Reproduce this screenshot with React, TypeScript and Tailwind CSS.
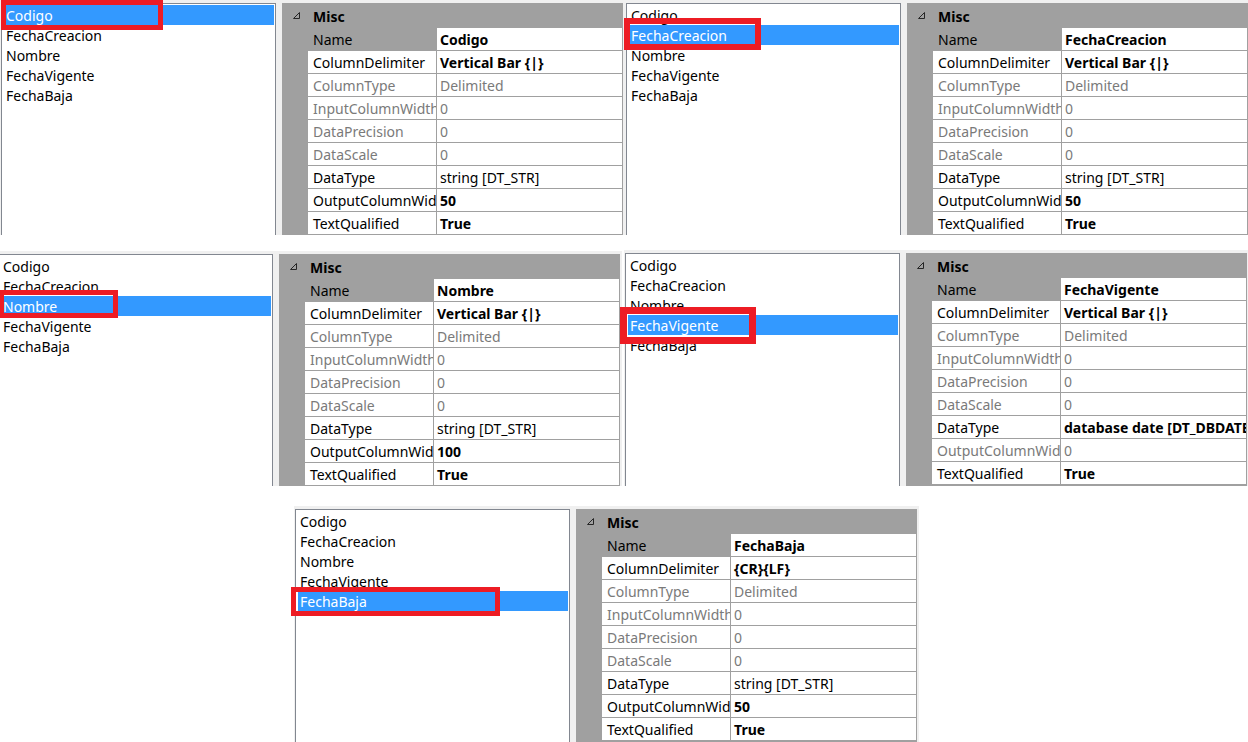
import React from "react";

type Row = { k: string; v: string; s: "n" | "b" | "d"; sel?: boolean };

const items = ["Codigo", "FechaCreacion", "Nombre", "FechaVigente", "FechaBaja"];

function makeRows(
  name: string,
  delim: string,
  out: string,
  dataType = "string [DT_STR]",
  dataTypeBold = false,
  outDisabled = false
): Row[] {
  return [
    { k: "Name", v: name, s: "b", sel: true },
    { k: "ColumnDelimiter", v: delim, s: "b" },
    { k: "ColumnType", v: "Delimited", s: "d" },
    { k: "InputColumnWidth", v: "0", s: "d" },
    { k: "DataPrecision", v: "0", s: "d" },
    { k: "DataScale", v: "0", s: "d" },
    { k: "DataType", v: dataType, s: dataTypeBold ? "b" : "n" },
    { k: "OutputColumnWidth", v: out, s: outDisabled ? "d" : "b" },
    { k: "TextQualified", v: "True", s: "b" },
  ];
}

function Grid({ rows }: { rows: Row[] }) {
  return (
    <div className="ml-[6px] w-[341px] h-full shrink-0 bg-[#a0a0a0] overflow-hidden">
      {/* category header */}
      <div className="flex h-[25px] items-center pt-[1px]">
        <svg width="7" height="7" viewBox="0 0 7 7" className="ml-[11px] -mt-[2px]">
          <polygon points="6.5,0.5 6.5,6.5 0.5,6.5" fill="none" stroke="#262626" strokeWidth="1" />
        </svg>
        <span className="ml-[13px] font-bold text-black">Misc</span>
      </div>
      {rows.map((r) => (
        <div key={r.k} className="flex h-[23px] pb-[1px] pl-[26px]">
          <div
            className={`w-[128px] shrink-0 overflow-hidden whitespace-nowrap pl-[5px] pt-[1px] leading-[21px] ${
              r.sel ? "" : "bg-white"
            } ${r.s === "d" ? "text-[#7a7a7a]" : "text-black"}`}
          >
            {r.k}
          </div>
          <div
            className={`ml-[1px] w-[185px] shrink-0 overflow-hidden whitespace-nowrap bg-white pl-[3px] pt-[1px] leading-[21px] ${
              r.s === "b" ? "font-bold text-black" : r.s === "d" ? "text-[#7a7a7a]" : "text-black"
            }`}
          >
            {r.v}
          </div>
        </div>
      ))}
    </div>
  );
}

function Panel({ sel, rows, red, className }: { sel: number; rows: Row[]; red: string; className: string }) {
  return (
    <div className={`relative flex w-[625px] shrink-0 bg-[#f0f0f0] pl-[1px] pt-[3px] ${className}`}>
      <div className="h-full w-[275px] shrink-0 overflow-hidden border border-b-0 border-[#828790] bg-white pl-[2px] pr-[1px] pt-[1px]">
        {items.map((it, i) => (
          <div
            key={it}
            className={`h-[20px] whitespace-nowrap pl-[2px] pt-[1px] leading-[20px] ${
              i === sel ? "bg-[#3399ff] text-white" : "text-black"
            }`}
          >
            {it}
          </div>
        ))}
      </div>
      <Grid rows={rows} />
      <div className={`absolute border-[#ed1c24] ${red}`} />
    </div>
  );
}

export default function App() {
  return (
    <div className="h-[742px] w-[1248px] overflow-hidden bg-white font-['Noto_Sans',sans-serif] text-[14px]">
      <div className="flex">
        <Panel
          sel={0}
          rows={makeRows("Codigo", "Vertical Bar {|}", "50")}
          red="left-[1px] top-0 h-[30px] w-[162px] border-[5px]"
          className="h-[235px]"
        />
        <Panel
          sel={1}
          rows={makeRows("FechaCreacion", "Vertical Bar {|}", "50")}
          red="-left-[1px] top-[18px] h-[32px] w-[137px] border-[6px]"
          className="h-[235px]"
        />
      </div>
      <div className="mt-[15px] flex items-start">
        <Panel
          sel={2}
          rows={makeRows("Nombre", "Vertical Bar {|}", "100")}
          red="left-[2px] top-[39px] h-[28px] w-[119px] border-[5px]"
          className="-ml-[3px] mt-[1px] h-[235px]"
        />
        <Panel
          sel={3}
          rows={makeRows("FechaVigente", "Vertical Bar {|}", "0", "database date [DT_DBDATE]", true, true)}
          red="-left-[4px] top-[57px] h-[37px] w-[136px] border-[7px]"
          className="ml-[2px] h-[236px]"
        />
      </div>
      <div className="mt-[20px] flex">
        <Panel
          sel={4}
          rows={makeRows("FechaBaja", "{CR}{LF}", "50")}
          red="-left-[3px] top-[81px] h-[29px] w-[209px] border-[5px]"
          className="ml-[294px] h-[236px]"
        />
      </div>
    </div>
  );
}
